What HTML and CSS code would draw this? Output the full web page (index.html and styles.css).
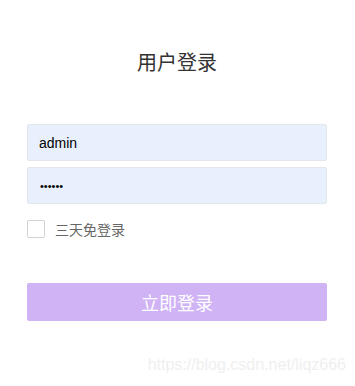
FILE: index.html
```
<!DOCTYPE html>
<html>
<head>
<meta charset="utf-8">
<link rel="stylesheet" href="styles.css">
</head>
<body>
<div class="page">
  <h1 class="title">用户登录</h1>
  <form class="form">
    <input class="field" type="text" value="admin">
    <input class="field field-pass" type="password" value="123456">
    <label class="remember"><span class="box"></span><span class="remember-text">三天免登录</span></label>
    <button class="submit" type="button">立即登录</button>
  </form>
  <div class="watermark">https://blog.csdn.net/liqz666</div>
</div>
</body>
</html>
```
FILE: styles.css
```
html, body {
  margin: 0;
  padding: 0;
  background: #fff;
}
.page {
  position: relative;
  width: 355px;
  height: 386px;
  box-sizing: border-box;
  padding: 0 28px 0 27px;
  font-family: "Noto Sans CJK SC", "Liberation Sans", sans-serif;
  overflow: hidden;
}
.title {
  margin: 0;
  padding-top: 48px;
  height: 28px;
  line-height: 28px;
  font-size: 20px;
  font-weight: normal;
  color: #333;
  text-align: center;
}
.form {
  display: flex;
  flex-direction: column;
  margin-top: 48px;
}
.field {
  box-sizing: border-box;
  width: 300px;
  height: 37px;
  margin: 0 0 6px 0;
  padding: 0 11px;
  border: 1px solid #e3e6ea;
  border-radius: 2px;
  background: #e8f0fe;
  font-family: "Liberation Sans", Arial, sans-serif;
  font-size: 14px;
  color: #000;
  outline: none;
}
.field-pass {
  font-size: 11px;
  padding-left: 12px;
}
.remember {
  display: flex;
  align-items: center;
  margin-top: 10px;
  height: 18px;
}
.box {
  box-sizing: border-box;
  width: 18px;
  height: 18px;
  border: 1px solid #d2d2d2;
  border-radius: 2px;
  background: #fff;
}
.remember-text {
  margin-left: 10px;
  font-size: 14px;
  color: #666;
}
.submit {
  margin-top: 45px;
  width: 300px;
  height: 38px;
  border: none;
  border-radius: 2px;
  background: #cfb3f5;
  color: #fff;
  font-family: "Noto Sans CJK SC", sans-serif;
  font-size: 18px;
  padding: 0;
}
.watermark {
  position: absolute;
  right: 9px;
  top: 356px;
  font-family: "Liberation Sans", Arial, sans-serif;
  font-size: 16px;
  color: #efefef;
}
```
